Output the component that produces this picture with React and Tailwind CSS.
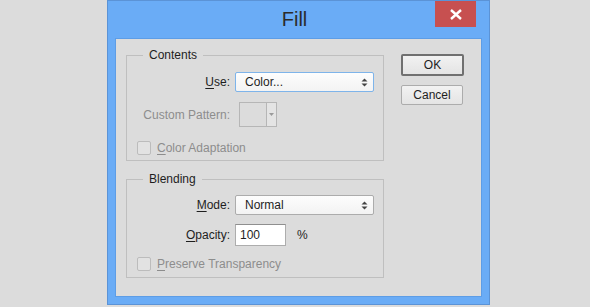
import React from 'react';

const font = { fontFamily: '"Liberation Sans", Arial, sans-serif' };

function Arrows() {
  return (
    <svg width="7" height="9" viewBox="0 0 7 9" className="shrink-0">
      <path d="M3.5 0.5 L6.5 3.5 L0.5 3.5 Z" fill="#444" />
      <path d="M3.5 8.5 L6.5 5.5 L0.5 5.5 Z" fill="#444" />
    </svg>
  );
}

function Select({ value, focused }) {
  return (
    <div
      className={`flex items-center justify-between w-[139px] h-[20px] pl-[9px] pr-[5px] rounded-[2px] border bg-gradient-to-b from-[#fdfdfd] to-[#f3f3f3] ${
        focused ? 'border-[#7eb4ea]' : 'border-[#acacac]'
      }`}
    >
      <span className="text-[#1e1e1e]">{value}</span>
      <Arrows />
    </div>
  );
}

function Checkbox({ children }) {
  return (
    <div className="flex items-center gap-[6px] text-[#8d8d8d]">
      <span className="w-[14px] h-[14px] rounded-[2px] border border-[#bcbcbc] bg-[#e2e2e2]" />
      <span>{children}</span>
    </div>
  );
}

function Group({ title, className, children }) {
  return (
    <div className={`relative border border-[#bfbfbf] ${className}`}>
      <span className="absolute -top-[8px] left-[16px] px-[6px] bg-[#dcdcdc] leading-[15px] text-[#1e1e1e]">
        {title}
      </span>
      {children}
    </div>
  );
}

export default function App() {
  return (
    <div className="w-[590px] h-[307px] bg-[#dcdcdc] pl-[107px] text-[12px]" style={font}>
      <div className="w-[383px] h-[305px] border border-[#5b93d6] bg-[#6aacf6] flex flex-col">
        <div className="relative h-[37px] flex items-center justify-center pr-[8px]">
          <span className="text-[20px] text-[#2b2b2b] leading-none -mt-[1px]">Fill</span>
          <button className="absolute right-[13px] top-0 w-[41px] h-[26px] bg-[#c75050] flex items-center justify-center">
            <svg width="12" height="11" viewBox="0 0 12 11">
              <path d="M1 1 L11 10 M11 1 L1 10" stroke="#fff" strokeWidth="2.4" />
            </svg>
          </button>
        </div>
        <div className="mx-[7px] h-[259px] border border-[#5d9de6] bg-[#dcdcdc] flex pl-[10px] pt-[16px] gap-[17px]">
          <div className="flex flex-col gap-[18px]">
            <Group title="Contents" className="w-[258px] h-[106px] pt-[16px]">
              <div className="flex items-center">
                <span className="w-[103px] text-right text-[#1e1e1e]">
                  <u className="underline-offset-2">U</u>se:
                </span>
                <span className="ml-[5px]"><Select value="Color..." focused /></span>
              </div>
              <div className="flex items-center mt-[10px] h-[25px]">
                <span className="w-[103px] text-right text-[#8d8d8d]">Custom Pattern:</span>
                <div className="ml-[9px] flex h-[25px]">
                  <span className="w-[28px] h-[25px] border border-[#b6b6b6] bg-[#dcdcdc]" />
                  <span className="w-[10px] h-[25px] border border-l-0 border-[#b6b6b6] bg-[#e4e4e4] flex items-center justify-center">
                    <svg width="5" height="3" viewBox="0 0 5 3">
                      <path d="M0 0 L5 0 L2.5 3 Z" fill="#9a9a9a" />
                    </svg>
                  </span>
                </div>
              </div>
              <div className="mt-[12px] pl-[10px]">
                <Checkbox>
                  <u className="underline-offset-2">C</u>olor Adaptation
                </Checkbox>
              </div>
            </Group>
            <Group title="Blending" className="w-[258px] h-[99px] pt-[15px]">
              <div className="flex items-center">
                <span className="w-[103px] text-right text-[#1e1e1e]">
                  <u className="underline-offset-2">M</u>ode:
                </span>
                <span className="ml-[5px]"><Select value="Normal" /></span>
              </div>
              <div className="flex items-center mt-[9px]">
                <span className="w-[103px] text-right text-[#1e1e1e]">
                  <u className="underline-offset-2">O</u>pacity:
                </span>
                <div className="ml-[5px] w-[51px] h-[22px] border border-[#adadad] border-t-[#8f8f8f] bg-white flex items-center pl-[4px] text-[#1e1e1e]">
                  100
                </div>
                <span className="ml-[11px] text-[#1e1e1e]">%</span>
              </div>
              <div className="mt-[9px] pl-[10px]">
                <Checkbox>
                  <u className="underline-offset-2">P</u>reserve Transparency
                </Checkbox>
              </div>
            </Group>
          </div>
          <div className="flex flex-col gap-[9px] pt-[-1px] -mt-[1px]">
            <button className="w-[63px] h-[22px] rounded-[2px] border-2 border-[#707070] bg-gradient-to-b from-[#f2f2f2] to-[#e4e4e4] text-[#1e1e1e]">
              OK
            </button>
            <button className="w-[62px] h-[20px] rounded-[2px] border border-[#acacac] bg-gradient-to-b from-[#f2f2f2] to-[#e4e4e4] text-[#1e1e1e]">
              Cancel
            </button>
          </div>
        </div>
      </div>
    </div>
  );
}
